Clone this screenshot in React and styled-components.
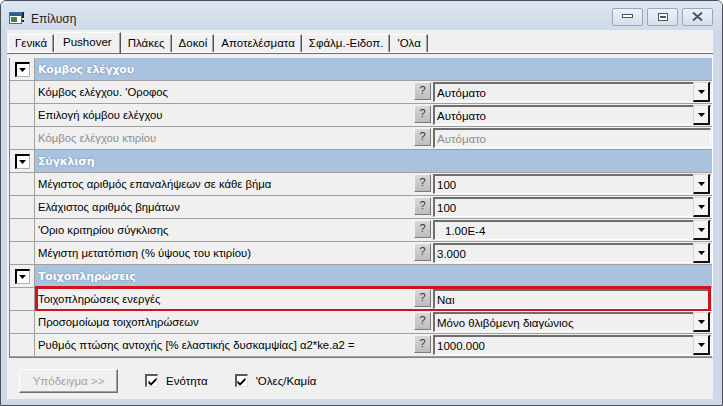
import React from "react"
import styled, { createGlobalStyle } from "styled-components"

const Global = createGlobalStyle`
    html, body { margin: 0; padding: 0; background: #ffffff; }
    body { font-family: "Liberation Sans", "DejaVu Sans", sans-serif; font-size: 11px; color: #000; }
`

const Window = styled.div`
    width: 723px;
    height: 406px;
    box-sizing: border-box;
    border: 1px solid #4a4f57;
    border-radius: 6px 6px 0 0;
    background: #cdd9e8;
    display: flex;
    flex-direction: column;
    overflow: hidden;
`

const TitleBar = styled.div`
    height: 29px;
    display: flex;
    align-items: center;
    padding: 0 9px 0 8px;
    background: linear-gradient(#dde6f1, #cfdbea);
`

const Title = styled.span`
    font-size: 12px;
    color: #1e1e1e;
    margin-left: 6px;
    flex: 1;
    padding-top: 6px;
`

const CaptionButtons = styled.div`
    display: flex;
    gap: 4px;
    padding-top: 2px;
`

const CaptionButton = styled.div`
    width: 29px;
    height: 16px;
    border: 1px solid #9aa7b8;
    border-radius: 2px;
    background: linear-gradient(#eef2f7, #d5dfeb);
    display: flex;
    align-items: center;
    justify-content: center;
`

const Body = styled.div`
    flex: 1;
    margin: 0 9px 6px 6px;
    background: #f0f0f0;
    display: flex;
    flex-direction: column;
`

const TabStrip = styled.div`
    height: 22px;
    display: flex;
    align-items: flex-end;
    padding-left: 1px;
    border-bottom: 1px solid #ffffff;
    box-shadow: 0 1px 0 #6b6b6b;
`

const Tab = styled.div`
    height: ${(p) => (p.active ? "21px" : "18px")};
    padding: 0 ${(p) => (p.active ? "8px" : "6px")} 2px;
    display: flex;
    align-items: center;
    box-sizing: border-box;
    font-size: 11.5px;
    border-left: 1px solid ${(p) => (p.first || p.active ? "#ffffff" : "transparent")};
    border-top: 1px solid #ffffff;
    border-right: 1px solid #555;
    box-shadow: inset -1px 0 0 #a0a0a0;
    background: #f0f0f0;
    margin-bottom: ${(p) => (p.active ? "-1px" : "0")};
    position: relative;
    z-index: ${(p) => (p.active ? 1 : 0)};
`

const Grid = styled.div`
    margin-top: 5px;
    margin-left: 2px;
    border-left: 1px solid #808080;
    border-right: 1px solid #ffffff;
    border-bottom: 1px solid #808080;
    display: flex;
    flex-direction: column;
`

const Row = styled.div`
    height: 23px;
    box-sizing: border-box;
    display: flex;
    align-items: stretch;
    border-bottom: 1px solid #a0a0a0;
    background: #f0f0f0;
    position: relative;
`

const ToggleCell = styled.div`
    width: 24px;
    flex-shrink: 0;
    border-right: 1px solid #a0a0a0;
    background: #f0f0f0;
    display: flex;
    align-items: center;
    justify-content: center;
`

const ToggleBox = styled.div`
    width: 15px;
    height: 15px;
    box-sizing: border-box;
    background: #ffffff;
    border-top: 2px solid #000;
    border-left: 2px solid #000;
    border-right: 1px solid #b0b0b0;
    border-bottom: 1px solid #b0b0b0;
    display: flex;
    align-items: center;
    justify-content: center;
`

const HeaderBand = styled.div`
    flex: 1;
    background: #a9c3de;
    color: #ffffff;
    font-family: "DejaVu Sans", sans-serif;
    font-weight: 700;
    font-size: 11px;
    letter-spacing: -0.2px;
    display: flex;
    align-items: center;
    padding-left: 3px;
    text-shadow: 0 0 2px #6583aa;
`

const Label = styled.div`
    flex: 1;
    display: flex;
    align-items: center;
    padding-left: 3px;
    font-size: 11.3px;
    color: ${(p) => (p.disabled ? "#8d8d8d" : "#000")};
`

const HelpButton = styled.div`
    width: 17px;
    height: 18px;
    margin: 1px 1px 0 0;
    box-sizing: border-box;
    background: linear-gradient(#d8d8d8, #bdbdbd);
    border-top: 1px solid #f4f4f4;
    border-left: 1px solid #f4f4f4;
    border-right: 1px solid #7a7a7a;
    border-bottom: 1px solid #7a7a7a;
    display: flex;
    justify-content: center;
    font-size: 11px;
    line-height: 15px;
    color: #333;
`

const Field = styled.div`
    width: 278px;
    flex-shrink: 0;
    margin: 1px 1px 1px 1px;
    box-sizing: border-box;
    border-top: 2px solid #6e6e6e;
    border-left: 2px solid #6e6e6e;
    border-right: 1px solid #ffffff;
    border-bottom: 1px solid #ffffff;
    display: flex;
    align-items: stretch;
`

const FieldText = styled.div`
    flex: 1;
    display: flex;
    align-items: center;
    padding-left: ${(p) => p.indent || 2}px;
    font-size: 11.5px;
    color: ${(p) => (p.disabled ? "#8d8d8d" : "#000")};
`

const DropButton = styled.div`
    width: 17px;
    box-sizing: border-box;
    margin: -2px 0 -1px 0;
    background: #f4f4f4;
    border-top: 1px solid #d6d6d6;
    border-left: 1px solid #d6d6d6;
    border-right: 2px solid #111;
    border-bottom: 2px solid #111;
    display: flex;
    align-items: center;
    justify-content: center;
`

const Highlight = styled.div`
    position: absolute;
    left: 25px;
    right: 1px;
    top: -2px;
    bottom: -2px;
    border: 3px solid #d2121c;
    pointer-events: none;
`

const Footer = styled.div`
    flex: 1;
    display: flex;
    align-items: center;
    padding-left: 12px;
    padding-top: 4px;
`

const PlainButton = styled.div`
    width: 99px;
    height: 24px;
    box-sizing: border-box;
    border-top: 1px solid #ffffff;
    border-left: 1px solid #ffffff;
    border-right: 1px solid #6e6e6e;
    border-bottom: 1px solid #6e6e6e;
    box-shadow: inset -1px -1px 0 #a0a0a0;
    display: flex;
    align-items: center;
    justify-content: center;
    color: #a3a3a3;
    font-size: 11.5px;
    margin-right: 27px;
`

const Check = styled.label`
    display: flex;
    align-items: center;
    gap: 8px;
    font-size: 11.5px;
    margin-right: 27px;
`

const CheckBox = styled.span`
    width: 13px;
    height: 13px;
    box-sizing: border-box;
    background: #fff;
    border-top: 2px solid #5a5a5a;
    border-left: 2px solid #5a5a5a;
    border-right: 1px solid #e0e0e0;
    border-bottom: 1px solid #e0e0e0;
    display: flex;
    align-items: center;
    justify-content: center;
`

const Arrow = () => (
    <svg width="7" height="4" viewBox="0 0 7 4"><path d="M0 0h7L3.5 4z" fill="#000" /></svg>
)

const Tick = () => (
    <svg width="9" height="9" viewBox="0 0 9 9"><path d="M0.5 3.5l2.5 2.5L8.5 0.5v2.7L3 8.7 0.5 6.2z" fill="#000" /></svg>
)

const sections = [
    {
        title: "Κόμβος ελέγχου",
        rows: [
            { label: "Κόμβος ελέγχου. 'Οροφος", value: "Αυτόματο", drop: true },
            { label: "Επιλογή κόμβου ελέγχου", value: "Αυτόματο", drop: true },
            { label: "Κόμβος ελέγχου κτιρίου", value: "Αυτόματο", disabled: true },
        ],
    },
    {
        title: "Σύγκλιση",
        rows: [
            { label: "Μέγιστος αριθμός επαναλήψεων σε κάθε βήμα", value: "100", drop: true },
            { label: "Ελάχιστος αριθμός βημάτων", value: "100", drop: true },
            { label: "'Οριο κριτηρίου σύγκλισης", value: "1.00E-4", drop: true, indent: 10 },
            { label: "Μέγιστη μετατόπιση (% ύψους του κτιρίου)", value: "3.000", drop: true },
        ],
    },
    {
        title: "Τοιχοπληρώσεις",
        rows: [
            { label: "Τοιχοπληρώσεις ενεργές", value: "Ναι", marked: true },
            { label: "Προσομοίωμα τοιχοπληρώσεων", value: "Μόνο θλιβόμενη διαγώνιος", drop: true },
            { label: "Ρυθμός πτώσης αντοχής [% ελαστικής δυσκαμψίας] α2*ke.a2 =", value: "1000.000", drop: true },
        ],
    },
]

const tabs = ["Γενικά", "Pushover", "Πλάκες", "Δοκοί", "Αποτελέσματα", "Σφάλμ.-Ειδοπ.", "'Ολα"]

const App = () => {
    return (
        <>
            <Global />
            <Window>
                <TitleBar>
                    <svg width="16" height="14" viewBox="0 0 16 14" style={{ marginTop: 5 }}>
                        <rect x="0.5" y="1.5" width="12" height="11" fill="#fff" stroke="#4c6b8c" />
                        <rect x="1" y="2" width="11" height="3" fill="#2d5c9a" />
                        <rect x="2" y="6" width="6" height="5" fill="#3f8a3f" />
                        <rect x="13" y="1" width="2" height="6" fill="#222" />
                        <rect x="13" y="9" width="2" height="2" fill="#222" />
                    </svg>
                    <Title>Επίλυση</Title>
                    <CaptionButtons>
                        <CaptionButton>
                            <svg width="11" height="5"><rect x="0.5" y="0.5" width="10" height="3" fill="#fff" stroke="#4a5566" /></svg>
                        </CaptionButton>
                        <CaptionButton>
                            <svg width="10" height="8"><rect x="0.5" y="0.5" width="9" height="7" fill="#fff" stroke="#4a5566" /><rect x="2" y="3" width="6" height="2" fill="#4a5566" /></svg>
                        </CaptionButton>
                        <CaptionButton>
                            <svg width="11" height="9" viewBox="0 0 11 9"><path d="M1 0.5L5.5 4.5M10 0.5L5.5 4.5M1 8.5L5.5 4.5M10 8.5L5.5 4.5" stroke="#4a5566" strokeWidth="2" /></svg>
                        </CaptionButton>
                    </CaptionButtons>
                </TitleBar>
                <Body>
                    <TabStrip>
                        {tabs.map((t, i) => (
                            <Tab key={t} first={i === 0} active={t === "Pushover"}>{t}</Tab>
                        ))}
                    </TabStrip>
                    <Grid>
                        {sections.map((s) => (
                            <React.Fragment key={s.title}>
                                <Row>
                                    <ToggleCell>
                                        <ToggleBox><Arrow /></ToggleBox>
                                    </ToggleCell>
                                    <HeaderBand>{s.title}</HeaderBand>
                                </Row>
                                {s.rows.map((r) => (
                                    <Row key={r.label}>
                                        <ToggleCell />
                                        <Label disabled={r.disabled}>{r.label}</Label>
                                        <HelpButton>?</HelpButton>
                                        <Field>
                                            <FieldText disabled={r.disabled} indent={r.indent}>{r.value}</FieldText>
                                            {r.drop && <DropButton><Arrow /></DropButton>}
                                        </Field>
                                        {r.marked && <Highlight />}
                                    </Row>
                                ))}
                            </React.Fragment>
                        ))}
                    </Grid>
                    <Footer>
                        <PlainButton>Υπόδειγμα &gt;&gt;</PlainButton>
                        <Check><CheckBox><Tick /></CheckBox>Ενότητα</Check>
                        <Check><CheckBox><Tick /></CheckBox>'Ολες/Καμία</Check>
                    </Footer>
                </Body>
            </Window>
        </>
    )
}

export default App
